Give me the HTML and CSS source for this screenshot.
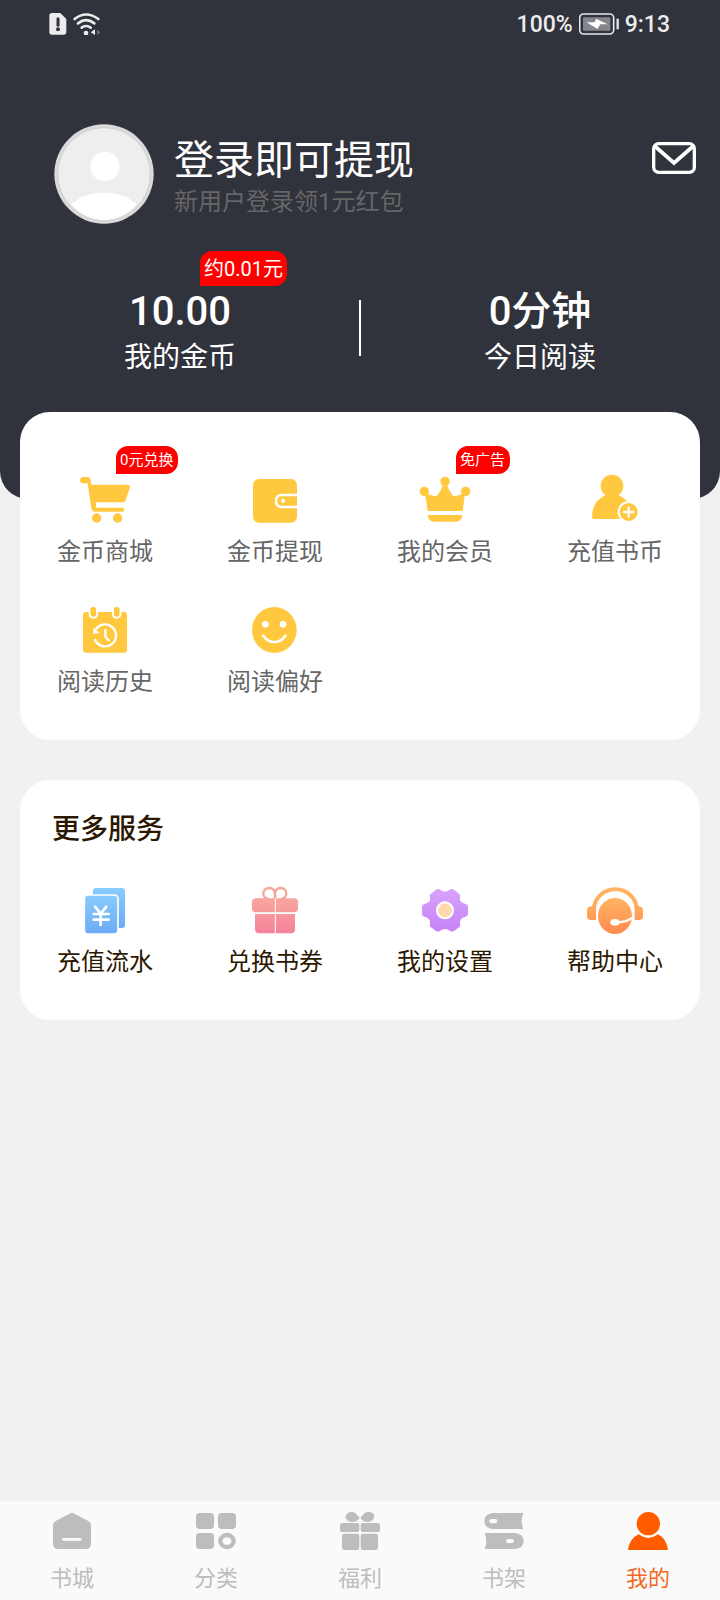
FILE: index.html
```html
<!DOCTYPE html>
<html lang="zh-CN">
<head>
<meta charset="utf-8">
<meta name="viewport" content="width=device-width, initial-scale=1">
<title>我的</title>
<link rel="stylesheet" href="styles.css">
</head>
<body>
<div class="page">
  <header class="header">
    <div class="status">
      <div class="status-group">
        <svg class="sim" viewBox="0 0 54 66" aria-hidden="true"><path d="M9 0H34L52 18V57Q52 65 44 65H9Q1 65 1 57V8Q1 0 9 0Z" fill="#ececec"/><path d="M27 17V37" stroke="#30323c" stroke-width="9" stroke-linecap="round"/><circle cx="27" cy="49" r="6" fill="#30323c"/></svg>
        <svg class="wifi" viewBox="0 0 84 66" aria-hidden="true"><g fill="none" stroke="#ececec" stroke-width="8" stroke-linecap="round"><path d="M5 18Q39-9 76 18"/><path d="M15 31Q39 12 64 31"/><path d="M26 44Q39 34 53 44"/></g><circle cx="39" cy="60" r="7" fill="#ececec"/><path d="M66 49V66L53 58Z" fill="#ececec"/><path d="M73 50V66L82 58Z" fill="#777980"/></svg>
      </div>
      <div class="status-group">
        <span>100%</span>
        <svg class="battery" viewBox="0 0 120 66" aria-hidden="true"><rect x="2" y="3" width="102" height="60" rx="12" fill="none" stroke="#e6e6e6" stroke-width="5"/><rect x="12" y="13" width="82" height="40" rx="3" fill="#85868c"/><path d="M23 28H47L51 17L86 34H64L55 48Z" fill="#fff"/><path d="M116 20V46" stroke="#e6e6e6" stroke-width="7" stroke-linecap="round"/></svg>
        <span>9:13</span>
      </div>
    </div>
    <div class="profile">
      <svg class="avatar" viewBox="0 0 300 300" aria-hidden="true"><circle cx="150" cy="150" r="149" fill="#dadada"/><circle cx="150" cy="150" r="139" fill="#eee" stroke="#c4c4c4" stroke-width="2"/><circle cx="153" cy="127" r="44" fill="#fff"/><path d="M52 240Q90 206 150 206T248 240Q210 288 150 288T52 240Z" fill="#fff"/></svg>
      <div class="profile-text">
        <h1 class="profile-title">登录即可提现</h1>
        <p class="profile-note">新用户登录领1元红包</p>
      </div>
      <button class="mail" type="button" aria-label="消息"><svg viewBox="0 0 132 96" aria-hidden="true"><rect x="5" y="5" width="122" height="86" rx="15" fill="none" stroke="#fff" stroke-width="10"/><path d="M8 12L66 63L124 12" fill="none" stroke="#fff" stroke-width="11"/></svg></button>
    </div>
    <div class="stats">
      <div class="stat">
        <span class="badge badge-large">约0.01元</span>
        <strong class="stat-value">10.00</strong>
        <span class="stat-label">我的金币</span>
      </div>
      <div class="stat">
        <strong class="stat-value">0分钟</strong>
        <span class="stat-label">今日阅读</span>
      </div>
    </div>
  </header>

  <main class="content">
    <section class="card card-main">
      <div class="grid">
        <button class="item" type="button"><span class="badge">0元兑换</span>
          <svg class="icon" viewBox="0 0 168 168" fill="#ffc83f" aria-hidden="true"><path d="M18 15H33Q42 16 43 38H152Q160 38 159 46L145 87Q143 91 138 91H56L58 107H136Q142 107 142 113T136 119H54Q45 119 43 107L32 34H18Q9 34 9 25T18 15Z"/><circle cx="59" cy="138" r="14"/><circle cx="122" cy="138" r="14"/></svg>
          <span>金币商城</span></button>
        <button class="item" type="button">
          <svg class="icon" viewBox="0 0 168 168" aria-hidden="true"><rect x="18" y="21" width="132" height="131" rx="18" fill="#ffc83f"/><path d="M151 69H105Q87 69 87 87T105 105H151" fill="none" stroke="#fff" stroke-width="7"/><circle cx="108" cy="86" r="6" fill="#fff"/></svg>
          <span>金币提现</span></button>
        <button class="item" type="button"><span class="badge">免广告</span>
          <svg class="icon" viewBox="0 0 168 168" fill="#ffc83f" aria-hidden="true"><circle cx="84" cy="28" r="14"/><circle cx="22" cy="58" r="14"/><circle cx="146" cy="58" r="14"/><path d="M24 64L34 66Q48 73 59 73Q72 57 79 36H89Q96 57 109 73Q120 73 134 66L144 64L137 117H32Z"/><path d="M32 129H136Q134 149 116 149H52Q34 149 32 129Z"/></svg>
          <span>我的会员</span></button>
        <button class="item" type="button">
          <svg class="icon" viewBox="0 0 168 168" fill="#ffc83f" aria-hidden="true"><circle cx="75" cy="42" r="34"/><path d="M15 135Q16 84 58 69H92Q130 82 135 120L110 141H20Q15 141 15 135Z"/><circle cx="125" cy="120" r="30" stroke="#fff" stroke-width="6"/><path d="M125 106V134M111 120H139" stroke="#fff" stroke-width="7" stroke-linecap="round"/></svg>
          <span>充值书币</span></button>
        <button class="item" type="button">
          <svg class="icon" viewBox="0 0 168 168" aria-hidden="true"><rect x="18" y="30" width="132" height="122" rx="9" fill="#ffc83f"/><g fill="#ffc83f" stroke="#fff" stroke-width="6"><path d="M38 18V36Q38 47 49 47T60 36V18"/><path d="M108 18V36Q108 47 119 47T130 36V18"/></g><g fill="#ffc83f"><rect x="41" y="15" width="16" height="28" rx="7"/><rect x="111" y="15" width="16" height="28" rx="7"/></g><g fill="none" stroke="#fff" stroke-width="7"><path d="M53 111A33 33 0 1 0 56 83"/><path d="M85 84V104L95 115" stroke-linecap="round"/></g><path d="M49 77L68 93L49 96Z" fill="#fff"/></svg>
          <span>阅读历史</span></button>
        <button class="item" type="button">
          <svg class="icon" viewBox="0 0 168 168" aria-hidden="true"><ellipse cx="82" cy="84" rx="67" ry="69" fill="#ffc83f"/><circle cx="55" cy="67" r="10" fill="#fff"/><circle cx="108" cy="67" r="10" fill="#fff"/><path d="M49 101Q62 120 82 120T115 101" fill="none" stroke="#fff" stroke-width="8" stroke-linecap="round"/></svg>
          <span>阅读偏好</span></button>
      </div>
    </section>

    <section class="card card-more">
      <h2 class="card-title">更多服务</h2>
      <div class="grid grid-dark">
        <button class="item" type="button">
          <svg class="icon" viewBox="0 0 168 168" aria-hidden="true"><defs><linearGradient id="blue" x1="0" y1="0" x2="0" y2="1"><stop offset="0" stop-color="#89ccff"/><stop offset="1" stop-color="#6baaf3"/></linearGradient></defs><rect x="48" y="18" width="96" height="120" rx="9" fill="url(#blue)"/><rect x="22" y="39" width="101" height="117" rx="11" fill="url(#blue)" stroke="#fff" stroke-width="5"/><path d="M54 74L71 95L88 74M71 95V129M50 96H95M50 113H95" fill="none" stroke="#fff" stroke-width="8" stroke-linecap="round"/></svg>
          <span>充值流水</span></button>
        <button class="item" type="button">
          <svg class="icon" viewBox="0 0 168 168" aria-hidden="true"><defs><linearGradient id="pink" gradientUnits="userSpaceOnUse" x1="0" y1="15" x2="0" y2="154"><stop offset="0" stop-color="#f3ac9f"/><stop offset=".4" stop-color="#f8a09d"/><stop offset="1" stop-color="#f6829a"/></linearGradient></defs><g fill="none" stroke="url(#pink)" stroke-width="7"><path d="M84 49V33Q81 18 67 18Q49 19 49 36Q50 49 65 50"/><path d="M84 49V33Q87 18 101 18Q118 19 118 36Q117 49 103 50"/></g><g fill="url(#pink)"><rect x="15" y="49" width="138" height="42" rx="12"/><path d="M24 96H144V142Q144 154 132 154H36Q24 154 24 142Z"/></g><path d="M85 50V154" stroke="#fff" stroke-width="3"/></svg>
          <span>兑换书券</span></button>
        <button class="item" type="button">
          <svg class="icon" viewBox="0 0 168 168" aria-hidden="true"><defs><linearGradient id="purple" x1="0" y1="0" x2="0" y2="1"><stop offset="0" stop-color="#d7a3fb"/><stop offset="1" stop-color="#c582f6"/></linearGradient></defs><path d="M41 36L56 24Q65 18 72 25Q84 33 96 25Q103 18 112 24L127 36Q131 39 129 46Q126 61 146 66Q153 67 153 75V95Q153 102 146 104Q126 109 129 124Q131 132 127 135L112 146Q103 152 96 145Q84 137 72 145Q65 152 56 146L41 135Q37 132 39 124Q42 109 22 104Q15 102 15 95V75Q15 67 22 66Q42 61 39 46Q37 39 41 36Z" fill="url(#purple)"/><circle cx="84" cy="85" r="24" fill="#ffd8ab" stroke="#fff" stroke-width="6"/></svg>
          <span>我的设置</span></button>
        <button class="item" type="button">
          <svg class="icon" viewBox="0 0 168 168" aria-hidden="true"><defs><linearGradient id="orange" gradientUnits="userSpaceOnUse" x1="0" y1="18" x2="0" y2="156"><stop offset="0" stop-color="#ffb566"/><stop offset=".3" stop-color="#ffb060"/><stop offset="1" stop-color="#ff8b50"/></linearGradient></defs><path d="M21 82A64 60 0 0 1 149 82" fill="none" stroke="url(#orange)" stroke-width="12"/><g fill="url(#orange)"><path d="M27 72V114H12Q0 114 0 102V84Q0 74 15 72Z"/><path d="M143 72V114H156Q168 114 168 102V84Q168 74 153 72Z"/><ellipse cx="84" cy="102" rx="51" ry="54"/></g><ellipse cx="84" cy="121" rx="14" ry="10" fill="#fff"/><path d="M92 121Q120 120 136 107" fill="none" stroke="#fff" stroke-width="7"/></svg>
          <span>帮助中心</span></button>
      </div>
    </section>
  </main>

  <nav class="tabs">
    <a class="tab" href="#"><svg class="tab-icon" viewBox="0 0 144 144" aria-hidden="true"><path d="M67 16Q72 13 77 16L121 39Q129 44 129 53V107Q129 123 113 123H31Q15 123 15 107V53Q15 44 23 39Z" fill="currentColor"/><path d="M46 94H97" stroke="#fafafa" stroke-width="8" stroke-linecap="round"/></svg><span>书城</span></a>
    <a class="tab" href="#"><svg class="tab-icon" viewBox="0 0 144 144" fill="currentColor" aria-hidden="true"><rect x="12" y="15" width="54" height="48" rx="11"/><rect x="78" y="15" width="54" height="48" rx="11"/><rect x="12" y="75" width="54" height="48" rx="11"/><ellipse cx="105" cy="99" rx="20" ry="18" fill="none" stroke="currentColor" stroke-width="13"/></svg><span>分类</span></a>
    <a class="tab" href="#"><svg class="tab-icon" viewBox="0 0 144 144" fill="currentColor" aria-hidden="true"><path d="M71 31Q58 8 42 12Q28 18 28 28Q32 42 50 42Q63 42 71 31Z"/><path d="M73 31Q86 8 102 12Q115 15 115 26Q110 42 94 42Q81 42 73 31Z"/><rect x="12" y="45" width="58" height="27" rx="6"/><rect x="74" y="45" width="58" height="27" rx="6"/><rect x="18" y="77" width="52" height="49" rx="7"/><rect x="74" y="77" width="52" height="49" rx="7"/></svg><span>福利</span></a>
    <a class="tab" href="#"><svg class="tab-icon" viewBox="0 0 144 144" fill="currentColor" aria-hidden="true"><path d="M39 15H130Q120 39 130 63H39Q13 60 13 39T39 15Z"/><path d="M14 75H105Q131 78 131 99T105 123H14Q24 99 14 75Z"/><rect x="28" y="33" width="24" height="13" rx="6" fill="#fafafa"/><rect x="78" y="93" width="24" height="12" rx="6" fill="#fafafa"/></svg><span>书架</span></a>
    <a class="tab tab-active" href="#" aria-current="page"><svg class="tab-icon" viewBox="0 0 144 144" fill="#ff5c00" aria-hidden="true"><circle cx="73" cy="47" r="35"/><path d="M44 79Q73 101 102 79Q128 92 132 126H12Q16 92 44 79Z"/></svg><span>我的</span></a>
  </nav>
</div>
</body>
</html>
```
FILE: styles.css
```css
* {
  box-sizing: border-box;
}

body {
  margin: 0;
  background: #f1f1f1;
  font-family: Roboto, "Noto Sans CJK SC", sans-serif;
}

h1, h2, p {
  margin: 0;
}

button {
  padding: 0;
  border: 0;
  background: none;
  font: inherit;
  color: inherit;
  cursor: pointer;
}

svg {
  display: block;
  flex: none;
}

.page {
  display: flex;
  flex-direction: column;
  min-height: 100vh;
}

.header {
  padding-bottom: 123px;
  border-radius: 0 0 28px 28px;
  background: #30323c;
  color: #fff;
}

.status {
  display: flex;
  justify-content: space-between;
  align-items: center;
  height: 48px;
  padding: 0 50px 0 49px;
  color: #ececec;
  font-size: 23px;
  font-weight: 500;
}

.status-group {
  display: flex;
  align-items: center;
  gap: 6px;
}

.sim {
  width: 18px;
  height: 22px;
}

.wifi {
  width: 28px;
  height: 22px;
}

.battery {
  width: 40px;
  height: 22px;
}

.profile {
  display: flex;
  align-items: flex-start;
  margin-top: 76px;
  padding: 0 24px 0 54px;
}

.avatar {
  width: 100px;
  height: 100px;
}

.profile-text {
  flex: 1;
  padding: 10px 0 0 20px;
}

.profile-title {
  font-size: 40px;
  font-weight: 400;
  line-height: 54px;
}

.profile-note {
  color: #666;
  font-size: 24px;
  line-height: 28px;
}

.mail {
  width: 44px;
  margin-top: 18px;
}

.stats {
  display: flex;
  align-items: center;
  margin-top: 66px;
}

.stat {
  position: relative;
  display: flex;
  flex: 1;
  flex-direction: column;
  align-items: center;
  gap: 6px;
}

.stat + .stat::before {
  content: "";
  position: absolute;
  top: 10px;
  left: -1px;
  width: 2px;
  height: 56px;
  background: #fff;
}

.stat-value {
  font-size: 40px;
  font-weight: 500;
  line-height: 44px;
}

.stat-label {
  font-size: 28px;
  line-height: 36px;
}

.badge {
  position: absolute;
  bottom: calc(100% - 2px);
  left: calc(50% + 11px);
  padding: 0 5px 0 4px;
  border-radius: 12px 12px 12px 0;
  background: #f00;
  color: #fff;
  font-size: 15px;
  line-height: 28px;
  white-space: nowrap;
}

.badge-large {
  bottom: calc(100% + 4px);
  left: calc(50% + 20px);
  padding: 2px 4px 0;
  font-size: 20px;
  line-height: 33px;
}

.content {
  display: flex;
  flex-direction: column;
  gap: 40px;
  margin-top: -87px;
  padding: 0 20px 40px;
}

.card {
  border-radius: 30px;
  background: #fff;
}

.card-main {
  padding: 60px 0 42px;
}

.card-more {
  padding: 32px 0 42px;
}

.card-title {
  padding-left: 32px;
  color: #2c1800;
  font-size: 28px;
  font-weight: 500;
  line-height: 36px;
}

.grid {
  display: grid;
  grid-template-columns: repeat(4, 1fr);
  row-gap: 34px;
  color: #666;
}

.grid-dark {
  margin-top: 34px;
  color: #2c1800;
}

.item {
  position: relative;
  display: flex;
  flex-direction: column;
  align-items: center;
  gap: 8px;
  font-size: 24px;
  line-height: 32px;
}

.icon {
  width: 56px;
  height: 56px;
}

.tabs {
  display: flex;
  margin-top: auto;
  padding: 7px 0 5px;
  background: #fafafa;
}

.tab {
  display: flex;
  flex: 1;
  flex-direction: column;
  align-items: center;
  gap: 7px;
  color: #bdbdbd;
  font-size: 22px;
  line-height: 32px;
  text-decoration: none;
}

.tab-icon {
  width: 48px;
  height: 48px;
}

.tab-active {
  color: #f26a21;
}
```
